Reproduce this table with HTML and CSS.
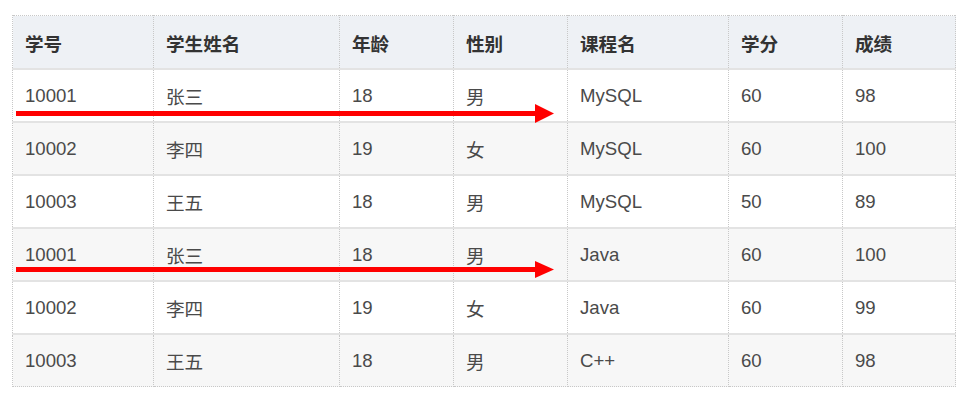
FILE: index.html
```html
<!DOCTYPE html>
<html lang="zh-CN">
<head>
    <meta charset="UTF-8">
    <title>学生成绩</title>
    <link rel="stylesheet" href="styles.css">
</head>
<body>
    <div class="table-wrap">
        <table class="score-table">
            <colgroup>
                <col class="c-id">
                <col class="c-name">
                <col class="c-sm">
                <col class="c-sm">
                <col class="c-course">
                <col class="c-sm">
                <col class="c-last">
            </colgroup>
            <thead>
                <tr>
                    <th>学号</th>
                    <th>学生姓名</th>
                    <th>年龄</th>
                    <th>性别</th>
                    <th>课程名</th>
                    <th>学分</th>
                    <th>成绩</th>
                </tr>
            </thead>
            <tbody>
                <tr><td>10001</td><td>张三</td><td>18</td><td>男</td><td>MySQL</td><td>60</td><td>98</td></tr>
                <tr><td>10002</td><td>李四</td><td>19</td><td>女</td><td>MySQL</td><td>60</td><td>100</td></tr>
                <tr><td>10003</td><td>王五</td><td>18</td><td>男</td><td>MySQL</td><td>50</td><td>89</td></tr>
                <tr><td>10001</td><td>张三</td><td>18</td><td>男</td><td>Java</td><td>60</td><td>100</td></tr>
                <tr><td>10002</td><td>李四</td><td>19</td><td>女</td><td>Java</td><td>60</td><td>99</td></tr>
                <tr><td>10003</td><td>王五</td><td>18</td><td>男</td><td>C++</td><td>60</td><td>98</td></tr>
            </tbody>
        </table>

        <!-- красные стрелки поверх таблицы -->
        <svg class="arrows" width="977" height="414" viewBox="0 0 977 414">
            <rect x="16" y="111" width="522" height="5" fill="#ff0000"/>
            <polygon points="535,104 554,113.5 535,123" fill="#ff0000"/>
            <rect x="16" y="267" width="522" height="5" fill="#ff0000"/>
            <polygon points="535,261 554,269.5 535,278" fill="#ff0000"/>
        </svg>
    </div>
</body>
</html>
```

FILE: styles.css
```css
/* страница */
body {
    margin: 0;
    background: #fff;
    font-family: "Liberation Sans", Arial, "Noto Sans CJK SC", sans-serif;
}

.table-wrap {
    position: relative;
    width: 977px;
    height: 414px;
    padding: 15px 0 0 12px;
    box-sizing: border-box;
}

.score-table {
    border-collapse: collapse;
    table-layout: fixed;
    width: 943px;
    font-size: 18.6px;
    color: #4a4a4a;
    border: 1px dotted #c8c8c8;
}

.c-id { width: 141px; }
.c-name { width: 186px; }
.c-sm { width: 114px; }
.c-course { width: 161px; }
.c-last { width: 113px; }

.score-table th,
.score-table td {
    text-align: left;
    padding: 0 12px;
    border-left: 1px dotted #c8c8c8;
    border-right: 1px dotted #c8c8c8;
    border-bottom: 2px solid #e3e3e3;
    white-space: nowrap;
}

.score-table th {
    height: 52px;
    background: #eef1f5;
    color: #333;
    font-weight: bold;
}

.score-table td {
    height: 51px;
}

.score-table tbody tr:nth-child(even) td {
    background: #f7f7f7;
}

.score-table tbody tr:last-child td {
    border-bottom: 1px dotted #c8c8c8;
}

/* стрелки */
.arrows {
    position: absolute;
    left: 0;
    top: 0;
    pointer-events: none;
}
```
